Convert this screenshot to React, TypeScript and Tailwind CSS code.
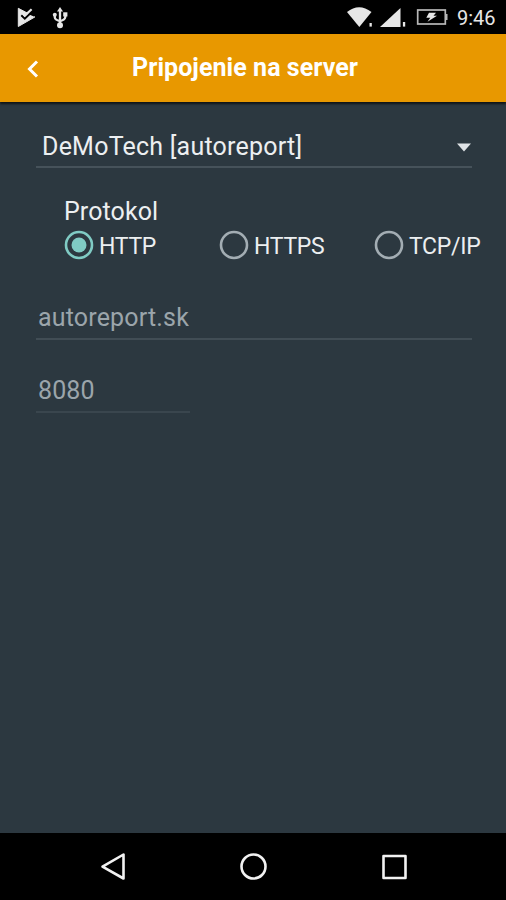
import { useState } from 'react';

const PROTOCOLS = ['HTTP', 'HTTPS', 'TCP/IP'];

function StatusBar() {
  return (
    <div className="h-[34px] bg-black flex items-center justify-between shrink-0 text-[#e6e6e6]">
      <div className="flex items-center">
        <svg width="76" height="34" viewBox="0 0 76 34">
          <path d="M18.3 8.3 L34.8 17 L18.3 26.5 Z" fill="#e6e6e6" stroke="#e6e6e6" strokeLinejoin="round" />
          <path d="M24.5 17 L34 8.5 V16.5 L28 14 Z" fill="#000" />
          <path d="M21.3 15.2 L24.8 18.6 L32 11.8" fill="none" stroke="#000" strokeWidth="2" />
          <path d="M22 12 L24.8 15.6 L31.6 9.3" fill="none" stroke="#e6e6e6" strokeWidth="2.2" />
          <g fill="none" stroke="#e6e6e6" strokeWidth="2.3">
            <path d="M60 10 V25" />
            <path d="M54.8 15 V17.5 Q55 20 60 21" />
            <path d="M65.3 14 V17 Q65 20 60 21" />
          </g>
          <path d="M60 7 L63 11.5 H57 Z" fill="#e6e6e6" />
          <circle cx="54.8" cy="14.8" r="2" fill="#e6e6e6" />
          <rect x="63.2" y="12.3" width="4.2" height="4.2" fill="#e6e6e6" />
          <circle cx="60" cy="25.2" r="3" fill="#e6e6e6" />
        </svg>
      </div>
      <div className="flex items-center pr-[11px]">
        <svg width="111" height="34" viewBox="346 0 111 34" fill="#e6e6e6">
          <path d="M347 12 Q359 2.5 371.5 12 L359.3 27 Z" />
          <rect x="369.5" y="23" width="2.3" height="3.6" />
          <path d="M400.5 8 V27 H380 Z" />
          <rect x="402.9" y="22" width="2.3" height="4.6" />
          <rect x="417.7" y="10" width="27.6" height="14" fill="none" stroke="#b8b8b8" strokeWidth="1.7" />
          <rect x="445.5" y="14" width="2" height="6" fill="#b8b8b8" />
          <path d="M429 12.8 H436 L433.5 15.8 H437 L427.5 21.8 L430.3 17.8 H426.3 Z" />
        </svg>
        <span className="text-[20px] leading-[34px] w-[38px] whitespace-nowrap pt-[2px]">9:46</span>
      </div>
    </div>
  );
}

function Header() {
  return (
    <header className="h-[68px] bg-[#e89800] flex items-center shrink-0 relative shadow-[0_2px_2px_rgba(0,0,0,0.65)]">
      <button className="w-[132px] h-full pl-[26px]" aria-label="Back">
        <svg width="14" height="20" viewBox="0 0 14 20" fill="none" stroke="#fff" strokeWidth="3">
          <path d="M11 3.5 L3.5 11 L11 18.5" />
        </svg>
      </button>
      <h1 className="text-white font-bold text-[25px] leading-[68px] h-[68px] tracking-[0.06px] whitespace-nowrap">Pripojenie na server</h1>
    </header>
  );
}

function Radio({ label, checked, onSelect }: { label: string; checked: boolean; onSelect: () => void }) {
  return (
    <button role="radio" aria-checked={checked} onClick={onSelect} className="w-[155px] shrink-0 h-[30px] flex items-center">
      <svg width="30" height="30" viewBox="0 0 30 30" fill="none">
        <circle cx="15" cy="15" r="13" stroke={checked ? '#80cbc4' : '#a3adb3'} strokeWidth="2.6" />
        {checked && <circle cx="15" cy="15" r="7.5" fill="#80cbc4" />}
      </svg>
      <span className="pl-[5px] text-[23px] leading-[30px] pt-[3px] tracking-[-0.3px] text-[#eceff1] whitespace-nowrap">{label}</span>
    </button>
  );
}

function NavBar() {
  return (
    <nav className="h-[67px] bg-black flex items-center justify-center shrink-0">
      <svg width="506" height="67" viewBox="0 833 506 67" fill="none" stroke="#f2f2f2" strokeWidth="2.6" strokeLinejoin="round">
        <path d="M123.5 854.5 V878.5 L102.5 866.7 Z" />
        <circle cx="253.5" cy="866.5" r="12" />
        <rect x="383.5" y="856" width="22" height="22" />
      </svg>
    </nav>
  );
}

export default function App() {
  const [protocol, setProtocol] = useState('HTTP');

  return (
    <div className="w-[506px] h-[900px] bg-[#2c3840] flex flex-col overflow-hidden font-['Roboto',sans-serif]">
      <StatusBar />
      <Header />
      <main className="flex-1 pl-9 pt-[25px]">
        <div className="w-[436px] h-[41px] border-b-2 border-[#46525a] flex items-start justify-between pl-[6px]">
          <span className="text-[25px] leading-[40px] tracking-[0.22px] text-[#eceff1] whitespace-nowrap">DeMoTech [autoreport]</span>
          <svg width="16" height="9" viewBox="0 0 16 9" className="mt-[16px]">
            <path d="M1 0.5 H15 L8 8.5 Z" fill="#dfe3e6" />
          </svg>
        </div>

        <div className="pl-7 pt-[26px]">
          <div className="text-[25px] leading-[36px] h-[36px] tracking-[0.1px] text-[#eceff1]">Protokol</div>
          <div className="flex" role="radiogroup">
            {PROTOCOLS.map((name) => (
              <Radio key={name} label={name} checked={protocol === name} onSelect={() => setProtocol(name)} />
            ))}
          </div>
        </div>

        <div className="mt-[38px] w-[436px] h-[42px] border-b-2 border-[#414d55] pl-[2px] text-[25px] leading-[40px] tracking-[0.17px] text-[#9ba5ab]">
          autoreport.sk
        </div>
        <div className="mt-[31px] w-[154px] h-[42px] border-b-2 border-[#3a464e] pl-[2px] text-[25px] leading-[40px] tracking-[0.1px] text-[#9ba5ab]">
          8080
        </div>
      </main>
      <NavBar />
    </div>
  );
}
